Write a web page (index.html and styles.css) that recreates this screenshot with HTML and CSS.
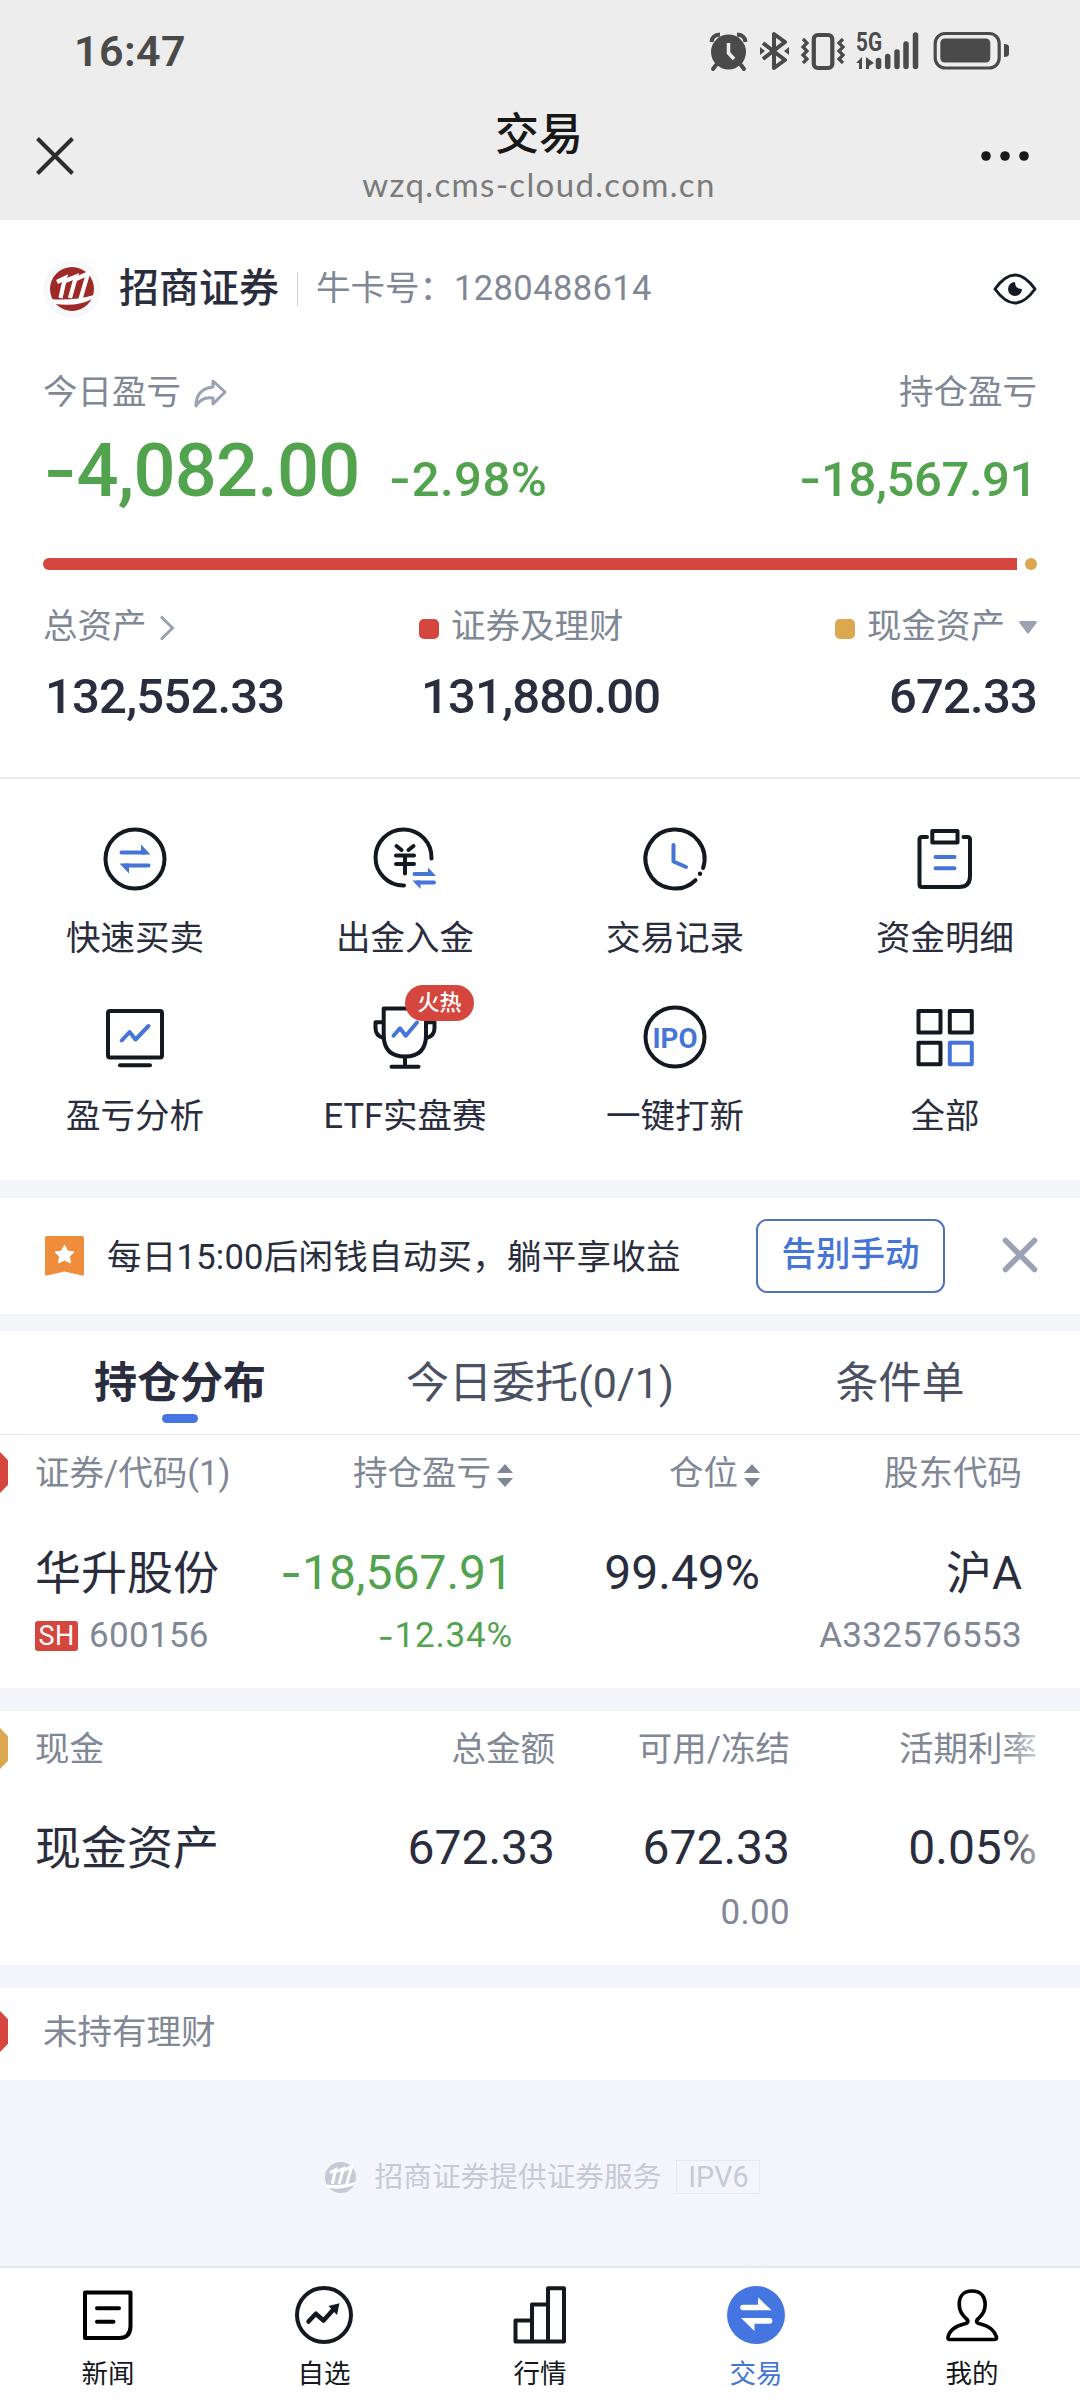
FILE: index.html
```
<!DOCTYPE html>
<html lang="zh-CN">
<head>
    <meta charset="UTF-8">
    <meta name="viewport" content="width=device-width, initial-scale=1.0">
    <title>交易</title>
    <link rel="stylesheet" href="styles.css">
</head>
<body>

<!-- shared shapes -->
<svg class="defs" width="0" height="0">
    <symbol id="brand" viewBox="0 0 44 44">
        <circle cx="22" cy="22" r="22" fill="currentColor"/>
        <g fill="none" stroke="#fff" stroke-width="4.2">
            <path d="M7 15 L15 11 L10.500 31"/>
            <path d="M15 14 L26 9.500 L20 31"/>
            <path d="M26 12 L38 6.500 L30.500 32"/>
        </g>
        <path d="M0 32 Q24 34 44 28 L42 32 Q28 40 5 37z" fill="#fff"/>
    </symbol>
    <symbol id="sort" viewBox="0 0 16 23">
        <path d="M8 0 L16 9 H0z M8 23 L16 14 H0z" fill="#808795"/>
    </symbol>
</svg>

<header class="top">
    <div class="status">
        <span class="time">16:47</span>
        <svg class="status-icons" viewBox="708 20 304 62" width="304" height="62" fill="none" stroke="#4a4a4a">
            <!-- alarm -->
            <circle cx="728.500" cy="52" r="17.500" fill="#4a4a4a" stroke="none"/>
            <path d="M711.500 42 Q712 35 720 34.500 M745.500 42 Q745 35 737 34.500" stroke-width="4"/>
            <path d="M716 65 L713 69 M741 65 L744 69" stroke-width="4" stroke-linecap="round"/>
            <path d="M728.500 43 V53 L734 59" stroke="#ededed" stroke-width="3.500"/>
            <!-- bluetooth -->
            <path d="M763 43 L785 60 L774 68 V34 L785 42 L763 59" stroke-width="4" stroke-linejoin="round"/>
            <path d="M760 47 L765 51 L760 55z M789 47 L784 51 L789 55z" fill="#4a4a4a" stroke="none"/>
            <!-- vibrate -->
            <rect x="813.800" y="35" width="18.500" height="33" rx="4" stroke-width="4.200"/>
            <path d="M803 39 L807 43 L803 47 L807 51 L803 55 L807 59 L803 63 M843 39 L839 43 L843 47 L839 51 L843 55 L839 59 L843 63" stroke-width="3.200"/>
            <!-- signal -->
            <text x="856" y="50.500" class="net" textLength="26" lengthAdjust="spacingAndGlyphs">5G</text>
            <path d="M862 57 V69 H859 V63 H856z M866 57 V69 H869 V66 L874 63z" fill="#4a4a4a" stroke="none"/>
            <path d="M878.500 60.500 V66.500 M887.700 56.500 V66.500 M897 52 V66.500 M906 44 V66.500 M915.500 35 V66.500" stroke-width="5.500" stroke-linecap="round"/>
            <!-- battery -->
            <rect x="935.200" y="33.500" width="64" height="34.500" rx="10" stroke-width="3.200"/>
            <rect x="940.300" y="38.500" width="50" height="24" rx="4.500" fill="#4a4a4a" stroke="none"/>
            <path d="M1004 44 Q1009 44 1009 47 V54 Q1009 57 1004 57z" fill="#4a4a4a" stroke="none"/>
        </svg>
    </div>
    <div class="navbar">
        <svg class="nav-close" width="38" height="38" viewBox="0 0 38 38" fill="none" stroke="#2c2c2c" stroke-width="4">
            <path d="M1.500 1.500 L36.500 36.500 M36.500 1.500 L1.500 36.500"/>
        </svg>
        <div class="nav-title">
            <h1>交易</h1>
            <p>wzq.cms-cloud.com.cn</p>
        </div>
        <svg class="nav-more" width="48" height="10" viewBox="0 0 48 10" fill="#181818">
            <circle cx="5" cy="5" r="4.800"/><circle cx="24" cy="5" r="4.800"/><circle cx="43" cy="5" r="4.800"/>
        </svg>
    </div>
</header>

<section class="account">
    <div class="account-row">
        <span class="logo"><svg width="44" height="44"><use href="#brand"/></svg></span>
        <strong class="broker">招商证券</strong>
        <span class="split"></span>
        <span class="card-no">牛卡号：<i>1280488614</i></span>
        <svg class="eye" width="44" height="32" viewBox="0 0 44 32">
            <path d="M2 16 Q12 2 22 2 Q32 2 42 16 Q32 30 22 30 Q12 30 2 16z" fill="none" stroke="#141a26" stroke-width="3" stroke-linejoin="round"/>
            <path d="M22 9 Q22 16 29 16 A7 7 0 1 1 22 9z" fill="#141a26"/>
        </svg>
    </div>

    <div class="pnl-labels">
        <span>今日盈亏</span>
        <svg width="33" height="29" viewBox="0 0 33 29" fill="none" stroke="#9aa2b3" stroke-width="3" stroke-linejoin="round">
            <path d="M19 2 L31 13 L19 25 V19 Q8 17 2 27 Q2 10 19 8z"/>
        </svg>
        <span class="push">持仓盈亏</span>
    </div>
    <div class="pnl-values">
        <span class="big"><b>-</b>4,082.00</span>
        <span class="rate"><b>-</b>2.98%</span>
        <span class="hold push"><b>-</b>18,567.91</span>
    </div>

    <div class="ratio">
        <span class="ratio-stock"></span>
        <span class="ratio-cash"></span>
    </div>

    <div class="assets">
        <div class="asset">
            <div class="asset-label">总资产
                <svg class="chevron" width="16" height="26" viewBox="0 0 16 26" fill="none" stroke="#9aa2b3" stroke-width="3"><path d="M2 1.500 L13.500 13 L2 24.500"/></svg>
            </div>
            <div class="asset-value">132,552.33</div>
        </div>
        <div class="asset">
            <div class="asset-label"><span class="dot red"></span>证券及理财</div>
            <div class="asset-value">131,880.00</div>
        </div>
        <div class="asset right">
            <div class="asset-label"><span class="dot gold"></span>现金资产
                <svg class="caret" width="18" height="13" viewBox="0 0 18 13"><path d="M1 0 H17 Q18.500 1 17.500 2 L10 12 Q9 13 8 12 L.5 2 Q-.5 1 1 0z" fill="#9ba2b4"/></svg>
            </div>
            <div class="asset-value">672.33</div>
        </div>
    </div>
</section>

<section class="menu">
    <div class="menu-item">
        <svg viewBox="0 0 64 64" class="icon">
            <circle cx="32" cy="32" r="29.500"/>
            <g class="blue"><path d="M18.500 25.500 H42 M45.500 38.500 H22"/><path class="fill" d="M38 17.500 L47.500 27.500 H38z M26 46.500 L16.500 36.500 H26z"/></g>
        </svg>
        <span>快速买卖</span>
    </div>
    <div class="menu-item">
        <svg viewBox="0 0 64 64" class="icon">
            <path d="M58.500 31.500 A28 28 0 1 0 31 58.500"/>
            <path d="M23.500 19 L28.500 23 M40.500 19 L35.500 23 M23 28.500 H41 M23 37 H41 M32 28.500 V46.500"/>
            <g class="blue"><path d="M41.500 47 H58 M61 55.500 H44"/><path class="fill" d="M55 40.500 L63 49 H55z M47.500 62 L39.500 53.500 H47.500z"/></g>
        </svg>
        <span>出金入金</span>
    </div>
    <div class="menu-item">
        <svg viewBox="0 0 64 64" class="icon">
            <path d="M60.100 41 A29.500 29.500 0 1 0 52.500 53.200"/>
            <circle cx="57" cy="46.800" r="2.200" class="solid"/>
            <path class="blue" d="M30.500 18 V34.500 L43 40"/>
        </svg>
        <span>交易记录</span>
    </div>
    <div class="menu-item">
        <svg viewBox="0 0 64 64" class="icon">
            <path d="M14 10 H9 Q6.500 10 6.500 12.500 V57.500 Q6.500 60 9 60 H46 Q57 60 57 49 V12.500 Q57 10 54.500 10 H50.500"/>
            <rect x="19.300" y="4" width="25.200" height="11.500"/>
            <path class="blue" d="M22.500 30 H41.500 M22.500 41.200 H41.500"/>
        </svg>
        <span>资金明细</span>
    </div>
    <div class="menu-item">
        <svg viewBox="0 0 64 64" class="icon">
            <rect x="5" y="6" width="54" height="46.500" rx="2"/>
            <path d="M17 60.300 H47"/>
            <path class="blue" d="M18.700 35.500 L26.600 27 L32.500 34.500 L45.500 21"/>
        </svg>
        <span>盈亏分析</span>
    </div>
    <div class="menu-item">
        <svg viewBox="0 0 64 64" class="icon">
            <path d="M10.700 3.500 H53 V30 Q53 51.500 32 51.500 Q10.700 51.500 10.700 30z M32 52 V61 M18.500 61.700 H45.500"/>
            <path d="M10 17.300 H2.500 V23 Q2.500 31 10.500 33 M54 17.300 H61.500 V23 Q61.500 31 53.500 33"/>
            <path class="blue" d="M20.500 30.700 L27 23.300 L32.800 30.700 L44 17.500"/>
        </svg>
        <span>ETF实盘赛</span>
        <em class="hot">火热</em>
    </div>
    <div class="menu-item">
        <svg viewBox="0 0 64 64" class="icon">
            <circle cx="32" cy="32" r="29.500"/>
            <text x="9.500" y="42.500" textLength="45" lengthAdjust="spacingAndGlyphs">IPO</text>
        </svg>
        <span>一键打新</span>
    </div>
    <div class="menu-item">
        <svg viewBox="0 0 64 64" class="icon">
            <rect x="5.500" y="6" width="22" height="21.500"/>
            <rect x="36.800" y="6" width="22" height="21.500"/>
            <rect x="5.500" y="37.700" width="22" height="21.500"/>
            <rect class="blue" x="36.800" y="37.700" width="22" height="21.500"/>
        </svg>
        <span>全部</span>
    </div>
</section>

<section class="promo">
    <svg class="flag" width="39" height="40" viewBox="0 0 39 40">
        <path d="M2 0 H37 Q39 0 39 2 V38 Q39 40 37 39.500 L19.500 35.500 L2 39.500 Q0 40 0 38 V2 Q0 0 2 0z" fill="#ef8d3c"/>
        <path d="M19.500 9 L22.500 15 L29 16 L24.500 20.500 L25.500 27 L19.500 24 L13.500 27 L14.500 20.500 L10 16 L16.500 15z" fill="#fff" stroke="#fff" stroke-linejoin="round"/>
    </svg>
    <span class="promo-text">每日15:00后闲钱自动买，躺平享收益</span>
    <button class="promo-btn">告别手动</button>
    <svg class="promo-close" width="36" height="36" viewBox="0 0 36 36" stroke="#9ba2b4" stroke-width="5.500" stroke-linecap="round">
        <path d="M3.500 3.500 L32.500 32.500 M32.500 3.500 L3.500 32.500"/>
    </svg>
</section>

<nav class="tabs">
    <span class="tab active">持仓分布</span>
    <span class="tab">今日委托(0/1)</span>
    <span class="tab">条件单</span>
</nav>

<section class="table stock">
    <i class="marker red"></i>
    <div class="row head">
        <span>证券/代码(1)</span>
        <span>持仓盈亏<svg width="16" height="23"><use href="#sort"/></svg></span>
        <span>仓位<svg width="16" height="23"><use href="#sort"/></svg></span>
        <span>股东代码</span>
    </div>
    <div class="row main">
        <span>华升股份</span>
        <span class="num green"><b>-</b>18,567.91</span>
        <span class="num">99.49%</span>
        <span>沪A</span>
    </div>
    <div class="row sub">
        <span><em class="market">SH</em>600156</span>
        <span class="green"><b>-</b>12.34%</span>
        <span></span>
        <span>A332576553</span>
    </div>
</section>

<section class="table cash">
    <i class="marker gold"></i>
    <div class="row head">
        <span>现金</span>
        <span>总金额</span>
        <span>可用/冻结</span>
        <span>活期利率</span>
    </div>
    <div class="row main">
        <span>现金资产</span>
        <span class="num">672.33</span>
        <span class="num">672.33</span>
        <span class="num">0.05%</span>
    </div>
    <div class="row sub">
        <span></span>
        <span></span>
        <span>0.00</span>
        <span></span>
    </div>
</section>

<section class="table empty">
    <i class="marker red"></i>
    <span>未持有理财</span>
</section>

<footer class="provider">
    <svg width="31" height="31"><use href="#brand"/></svg>
    <span>招商证券提供证券服务</span>
    <span class="ipv6">IPV6</span>
</footer>

<nav class="tabbar">
    <div class="tabbar-item">
        <svg viewBox="0 0 64 64" class="icon black">
            <path d="M9 9.500 H54.500 V43 Q54.500 55 43 55 H9z M21 25.300 H43 M21 38.700 H37.500"/>
        </svg>
        <span>新闻</span>
    </div>
    <div class="tabbar-item">
        <svg viewBox="0 0 64 64" class="icon">
            <circle cx="32" cy="32" r="27"/>
            <path d="M16.500 38.500 L23.800 30.700 L31.500 37.500 L41 27" stroke-width="4.500"/>
            <path class="solid" d="M36.500 23 L47.500 20.300 L45 32z"/>
        </svg>
        <span>自选</span>
    </div>
    <div class="tabbar-item">
        <svg viewBox="0 0 64 64" class="icon">
            <path d="M7.500 37.500 H24 V58.500 H7.500z M24 21.500 H40 V58.500 H24z M40 5.200 H56 V58.500 H40z"/>
        </svg>
        <span>行情</span>
    </div>
    <div class="tabbar-item current">
        <svg viewBox="0 0 64 64" width="64" height="64">
            <circle cx="32" cy="32" r="29" fill="#4575e0"/>
            <path d="M19 21.700 H34 V14.300 L47.500 27.300 H19 A2.800 2.800 0 0 1 19 21.700z M45.500 40.700 H30.500 V48 L17 35 H45.500 A2.800 2.800 0 0 1 45.500 40.700z" fill="#fff"/>
        </svg>
        <span>交易</span>
    </div>
    <div class="tabbar-item">
        <svg viewBox="0 0 64 64" class="icon black">
            <path d="M32 8 C23 8 19.200 14 19.200 21 C19.200 27 22 32 26 35.500 C29 38 28.500 40 24 41 C14 43 9 49 8 54 Q7.500 56.500 10 56.500 H54 Q57 56.500 56.500 54 C55 49 50 43 40.500 41 C36 40 35.500 38 38.500 35.500 C42.500 32 45.200 27 45.200 21 C45.200 14 41 8 32 8z" stroke-width="3.600"/>
        </svg>
        <span>我的</span>
    </div>
</nav>

</body>
</html>
```
FILE: styles.css
```
* {
    margin: 0;
    padding: 0;
    box-sizing: border-box;
}

body {
    width: 1080px;
    height: 2400px;
    display: flex;
    flex-direction: column;
    overflow: hidden;
    background-color: #f4f5fa;
    color: #292d3d;
    font-family: Roboto, 'Noto Sans CJK SC', sans-serif;
    font-size: 34.5px;
    line-height: 46px;
}

svg {
    display: block;
    flex: none;
}

i, em {
    font-style: normal;
}

/* wider minus sign in front of the losses */
b {
    font-family: Inter, sans-serif;
    font-weight: inherit;
}

.defs {
    position: absolute;
}

.push {
    margin-left: auto;
}

.green {
    color: #52a34e;
}

/* ---------- header ---------- */
.top {
    height: 220px;
    background-color: #ededed;
}

.status {
    display: flex;
    align-items: center;
    justify-content: space-between;
    height: 102px;
    padding: 0 68px 0 74px;
}

.time {
    font-size: 43px;
    font-weight: 600;
    color: #4a4a4a;
    letter-spacing: 0.4px;
}

.net {
    font-size: 25px;
    font-weight: bold;
    fill: #4a4a4a;
    stroke: none;
}

.navbar {
    display: flex;
    align-items: center;
    justify-content: space-between;
    height: 107px;
    padding: 0 51px 0 36px;
}

.nav-title {
    padding-top: 5px;
    text-align: center;
    margin-left: 23px;
}

.nav-title h1 {
    font-size: 44px;
    font-weight: 500;
    line-height: 56px;
    color: #181818;
}

.nav-title p {
    margin-top: -5px;
    font-family: Lato, sans-serif;
    font-size: 33px;
    line-height: 52px;
    color: #7b7b7b;
    letter-spacing: 1.35px;
}

/* ---------- account ---------- */
.account {
    height: 559px;
    padding: 40px 43px 0;
    background-color: #fff;
    border-bottom: 2px solid #ebebee;
}

.account-row {
    display: flex;
    align-items: center;
    height: 58px;
}

.logo {
    display: flex;
    align-items: center;
    justify-content: center;
    width: 58px;
    height: 58px;
    border-radius: 50%;
    background-color: #f7f8fa;
    color: #9e2a28;
}

.broker {
    margin-left: 18px;
    font-size: 40px;
    font-weight: 500;
}

.split {
    width: 1px;
    height: 34px;
    margin: 0 18px;
    background-color: #cfd2d9;
}

.card-no {
    padding-bottom: 2px;
    color: #808795;
}

.card-no i {
    letter-spacing: 0.4px;
}

.eye {
    margin-left: auto;
}

.pnl-labels {
    display: flex;
    align-items: center;
    height: 46px;
    margin-top: 51px;
    color: #808795;
}

.pnl-labels svg {
    margin: 2px 0 0 13px;
}

.pnl-values {
    display: flex;
    align-items: baseline;
    height: 80px;
    margin-top: 14px;
    line-height: 80px;
    font-weight: 500;
    color: #52a34e;
}

.big {
    font-size: 74px;
    letter-spacing: -0.8px;
}

.rate {
    margin-left: 29px;
    font-size: 49px;
    letter-spacing: 0.5px;
}

.hold {
    font-size: 49px;
    letter-spacing: -0.4px;
}

.ratio {
    display: flex;
    justify-content: space-between;
    height: 12px;
    margin-top: 49px;
}

.ratio-stock {
    width: 974px;
    border-radius: 6px 0 0 6px;
    background-color: #d4463e;
}

.ratio-cash {
    width: 12px;
    border-radius: 50%;
    background-color: #dba84f;
}

.assets {
    display: grid;
    grid-template-columns: 376px 1fr auto;
    margin-top: 33px;
}

.asset-label {
    display: flex;
    align-items: center;
    color: #808795;
}

.asset-value {
    margin-top: 18px;
    padding-left: 2px;
    font-size: 49px;
    font-weight: 500;
    line-height: 60px;
    letter-spacing: -0.8px;
}

.asset.right {
    text-align: right;
}

.dot {
    width: 20px;
    height: 20px;
    margin: 5px 12px 0 0;
    border-radius: 5px;
}

.red {
    background-color: #d4463e;
}

.gold {
    background-color: #dba84f;
}

.chevron {
    margin: 4px 0 0 12px;
}

.caret {
    margin: 3px 0 0 14px;
}

/* ---------- menu ---------- */
.menu {
    display: grid;
    grid-template-columns: repeat(4, 1fr);
    grid-auto-rows: 178px;
    height: 401px;
    padding-top: 48px;
    background-color: #fff;
}

.menu-item {
    position: relative;
    display: flex;
    flex-direction: column;
    align-items: center;
    gap: 24px;
}

.icon {
    width: 64px;
    height: 64px;
    overflow: visible;
    fill: none;
    stroke: #141820;
    stroke-width: 4;
    stroke-linecap: round;
    stroke-linejoin: round;
}

.icon .blue {
    stroke: #4575d6;
}

.icon .fill {
    fill: #4575d6;
    stroke: none;
}

.icon .solid {
    fill: #141820;
    stroke: none;
}

.icon text {
    font-size: 28px;
    font-weight: bold;
    fill: #4575d6;
    stroke: none;
}

.icon.black {
    stroke: #000;
}

.hot {
    position: absolute;
    left: 135px;
    top: -20px;
    width: 69px;
    height: 36px;
    border-radius: 18px;
    background-color: #d4463e;
    color: #fff;
    font-size: 22px;
    font-weight: 500;
    line-height: 36px;
    text-align: center;
}

/* ---------- promo ---------- */
.promo {
    display: flex;
    align-items: center;
    height: 116px;
    margin-top: 18px;
    padding: 0 43px 0 45px;
    background-color: #fff;
}

.promo-text {
    margin-left: 23px;
    padding-top: 1px;
    letter-spacing: 0.25px;
}

.promo-btn {
    width: 189px;
    height: 74px;
    margin: 0 0 1px auto;
    padding-bottom: 4px;
    border: 2px solid #4e74bd;
    border-radius: 11px;
    background: none;
    color: #4575d6;
    font: inherit;
    font-weight: 500;
}

.promo-close {
    margin: 0 -1px 2px 57px;
}

/* ---------- tabs ---------- */
.tabs {
    display: flex;
    height: 104px;
    margin-top: 17px;
    background-color: #fff;
    border-bottom: 1px solid #e6e7ea;
}

.tab {
    position: relative;
    flex: 1;
    text-align: center;
    font-size: 43px;
    line-height: 104px;
    color: #4a5163;
}

.tab.active {
    font-weight: bold;
    color: #292d3d;
}

.tab.active::after {
    content: '';
    position: absolute;
    left: 162px;
    bottom: 11px;
    width: 36px;
    height: 9px;
    border-radius: 5px;
    background-color: #4575e0;
}

/* ---------- holdings ---------- */
.table {
    position: relative;
    background-color: #fff;
}

.stock {
    height: 253px;
    padding-top: 15px;
}

.cash {
    height: 254px;
    margin-top: 23px;
    padding-top: 15px;
}

.row {
    display: grid;
    padding-left: 35px;
}

.stock .row {
    grid-template-columns: 280px 198px 247px 262px;
}

.cash .row {
    grid-template-columns: 280px 240px 235px 247px;
}

.row span {
    display: flex;
    align-items: center;
    justify-content: flex-end;
    white-space: nowrap;
}

.row span:first-child {
    justify-content: flex-start;
}

.head {
    color: #808795;
}

.head svg {
    margin: 4px 0 0 6px;
}

.main {
    margin-top: 47px;
    font-size: 46px;
    line-height: 60px;
}

.cash .main {
    margin-top: 46px;
}

.main .num {
    font-size: 48px;
}

.sub {
    margin-top: 10px;
    min-height: 46px;
    color: #808795;
    font-size: 35px;
    letter-spacing: 0.3px;
}

.cash .sub {
    margin-top: 12px;
}

.sub .green {
    color: #52a34e;
    letter-spacing: 0.8px;
}

.market {
    width: 43px;
    height: 30px;
    margin-right: 11px;
    border-radius: 3px;
    background-color: #d4463e;
    color: #fff;
    font-size: 27px;
    line-height: 31px;
    text-align: center;
}

/* category tag cut off by the left edge */
.marker {
    position: absolute;
    left: 0;
    top: 17px;
    width: 8px;
    height: 41px;
    clip-path: polygon(0 0, 100% 20%, 100% 80%, 0 100%);
}

.cash::after {
    content: '';
    position: absolute;
    right: 43px;
    top: 0;
    width: 32px;
    height: 100%;
    background: linear-gradient(to right, rgba(255, 255, 255, 0), rgba(255, 255, 255, 0.6));
}

.empty {
    height: 92px;
    margin-top: 23px;
    padding-left: 43px;
    line-height: 89px;
    color: #808795;
}

.empty .marker {
    top: 23px;
}

/* ---------- footer ---------- */
.provider {
    display: flex;
    align-items: center;
    justify-content: center;
    height: 186px;
    padding: 8px 0 0 5px;
    color: #c5cad6;
    font-size: 28.7px;
}

.provider span {
    margin-left: 19px;
}

.provider .ipv6 {
    width: 84px;
    height: 34px;
    margin-left: 15px;
    border: 1px solid #e7e9ee;
    line-height: 32px;
    text-align: center;
}

.tabbar {
    display: flex;
    height: 134px;
    border-top: 2px solid #e6e7eb;
    background-color: #fff;
}

.tabbar-item {
    flex: 1;
    display: flex;
    flex-direction: column;
    align-items: center;
    padding-top: 15px;
    font-size: 26.5px;
    line-height: 36px;
    color: #141820;
}

.tabbar-item span {
    margin-top: 9px;
}

.tabbar-item.current {
    color: #4575d6;
}
```
